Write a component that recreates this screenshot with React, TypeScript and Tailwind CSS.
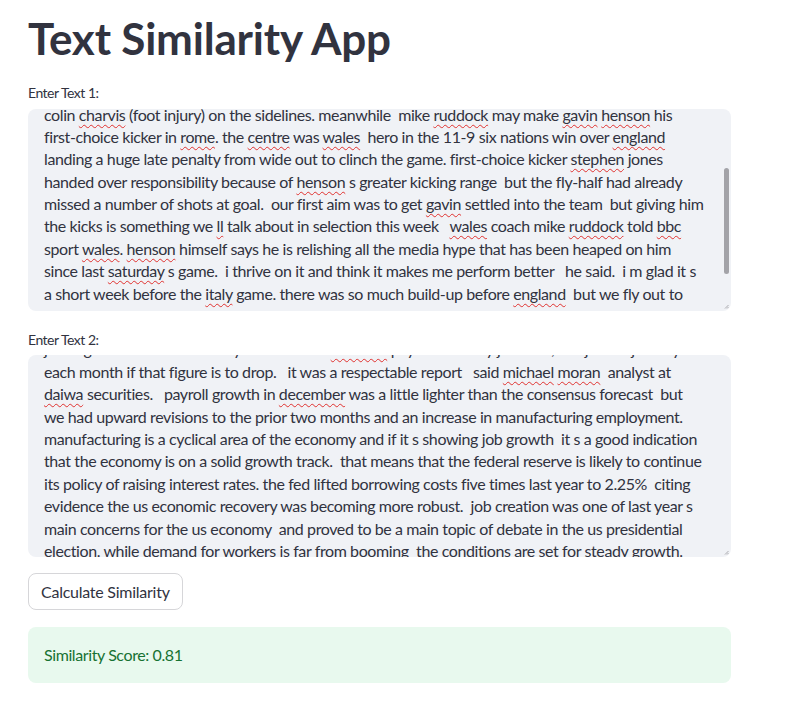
import React from "react";

// ~word~ marks a word the spell checker flagged
const text1 = [
  "colin ~charvis~ (foot injury) on the sidelines. meanwhile  mike ~ruddock~ may make ~gavin~ ~henson~ his",
  "first-choice kicker in ~rome~. the ~centre~ was ~wales~  hero in the 11-9 six nations win over ~england~",
  "landing a huge late penalty from wide out to clinch the game. first-choice kicker ~stephen~ jones",
  "handed over responsibility because of ~henson~ s greater kicking range  but the fly-half had already",
  "missed a number of shots at goal.  our first aim was to get ~gavin~ settled into the team  but giving him",
  "the kicks is something we ~ll~ talk about in selection this week   ~wales~ coach mike ~ruddock~ told ~bbc~",
  "sport ~wales~. ~henson~ himself says he is relishing all the media hype that has been heaped on him",
  "since last ~saturday~ s game.  i thrive on it and think it makes me perform better   he said.  i m glad it s",
  "a short week before the ~italy~ game. there was so much build-up before ~england~  but we fly out to",
];

const text2 = [
  "jobs figures released on friday showed that ~nonfarm~ payrolls rose by just 157,000 jobs in january",
  "each month if that figure is to drop.   it was a respectable report   said ~michael~ ~moran~  analyst at",
  "~daiwa~ securities.   payroll growth in ~december~ was a little lighter than the consensus forecast  but",
  "we had upward revisions to the prior two months and an increase in manufacturing employment.",
  "manufacturing is a cyclical area of the economy and if it s showing job growth  it s a good indication",
  "that the economy is on a solid growth track.  that means that the federal reserve is likely to continue",
  "its policy of raising interest rates. the fed lifted borrowing costs five times last year to 2.25%  citing",
  "evidence the us economic recovery was becoming more robust.  job creation was one of last year s",
  "main concerns for the us economy  and proved to be a main topic of debate in the us presidential",
  "election. while demand for workers is far from booming  the conditions are set for steady growth.",
];

function Line({ line }: { line: string }) {
  const parts = line.split("~");
  return (
    <div className="h-[22.4px] whitespace-pre">
      {parts.map((p, i) =>
        i % 2 === 1 ? (
          <span
            key={i}
            className="underline decoration-wavy decoration-[#e0312f] decoration-1 underline-offset-[3px]"
          >
            {p}
          </span>
        ) : (
          <span key={i}>{p}</span>
        )
      )}
    </div>
  );
}

function ResizeGrip() {
  return (
    <svg
      className="absolute right-[2px] bottom-[2px]"
      width="5"
      height="5"
      viewBox="0 0 5 5"
    >
      <path d="M1 4.5 L4.5 1 M3 4.5 L4.5 3" stroke="#9a9aa0" strokeWidth="0.8" />
    </svg>
  );
}

function FakeTextArea({
  lines,
  offset,
  scrollbar,
}: {
  lines: string[];
  offset: string;
  scrollbar?: boolean;
}) {
  return (
    <div className="relative h-[202px] overflow-hidden rounded-lg bg-[#f0f2f6]">
      <div
        className={`${offset} px-4 text-[16px] leading-[22.4px] tracking-[-0.4px] text-[#31333f]`}
      >
        {lines.map((l, i) => (
          <Line key={i} line={l} />
        ))}
      </div>
      {scrollbar && (
        <div className="absolute right-[2px] top-[59px] h-[106px] w-[5px] rounded-full bg-[#a3a3a8]" />
      )}
      <ResizeGrip />
    </div>
  );
}

export default function App() {
  return (
    <main className="min-h-screen bg-white font-['Lato',sans-serif] text-[#31333f]">
      <div className="ml-[28px] w-[703px] pt-[12px]">
        <h1 className="text-[44px] font-bold leading-[52px] tracking-[-0.2px]">
          Text Similarity App
        </h1>

        <div className="mt-[19px] text-[14px] leading-5 tracking-[-0.5px]">
          Enter Text 1:
        </div>
        <div className="mt-[6px]">
          <FakeTextArea lines={text1} offset="-mt-[5.5px]" scrollbar />
        </div>

        <div className="mt-[19px] text-[14px] leading-5 tracking-[-0.5px]">
          Enter Text 2:
        </div>
        <div className="mt-[5px]">
          <FakeTextArea lines={text2} offset="-mt-[16.6px]" />
        </div>

        <button
          type="button"
          className="mt-[16px] h-[37px] rounded-lg border border-[#d6d6d9] bg-white px-3 text-[16px] tracking-[-0.25px] text-[#31333f]"
        >
          Calculate Similarity
        </button>

        <div className="mt-[17px] flex h-[56px] items-center rounded-lg bg-[#e8f9ee] px-4 text-[16px] tracking-[-0.4px] text-[#177233]">
          Similarity Score: 0.81
        </div>
      </div>
    </main>
  );
}
